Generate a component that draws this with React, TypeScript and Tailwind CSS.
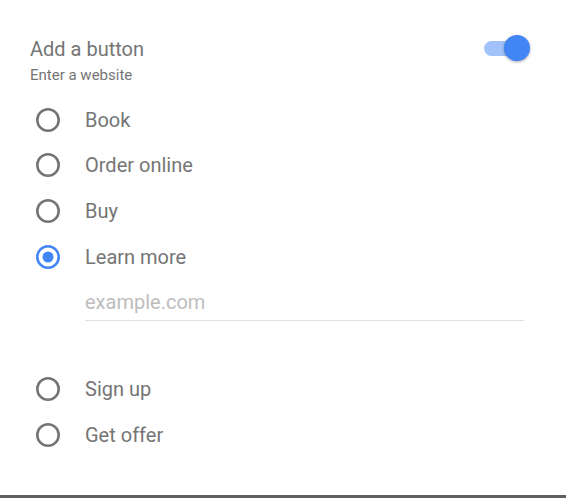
import React from "react";

function Radio({ checked }: { checked?: boolean }) {
  return (
    <svg width="24" height="24" viewBox="0 0 24 24" className="shrink-0">
      <circle cx="12" cy="12" r="10.7" fill="none" stroke={checked ? "#4285f4" : "#757575"} strokeWidth="2.6" />
      {checked && <circle cx="12" cy="12" r="5.5" fill="#4285f4" />}
    </svg>
  );
}

function Option({ label, checked }: { label: string; checked?: boolean }) {
  return (
    <div className="flex h-[45.6px] items-center">
      <div className="w-[49px] pl-[36px] box-content flex items-center">
        <Radio checked={checked} />
      </div>
      <span className="text-[20px] text-[#757575] leading-none">{label}</span>
    </div>
  );
}

export default function App() {
  return (
    <div
      className="relative w-[566px] h-[498px] bg-white overflow-hidden"
      style={{ fontFamily: "Roboto, 'Noto Sans', sans-serif" }}
    >
      <div className="flex items-start justify-between pl-[30px] pr-[36px] pt-[37px]">
        <div className="flex flex-col">
          <span className="text-[20px] leading-[24px] text-[#757575]">Add a button</span>
          <span className="text-[15px] leading-[18px] mt-[5px] text-[#757575]">Enter a website</span>
        </div>
        <div className="relative w-[46px] h-[26px] mt-[-2px]">
          <div className="absolute left-0 top-[6px] w-[40px] h-[15px] rounded-full bg-[#a1c2fa]" />
          <div className="absolute right-0 top-0 w-[26px] h-[26px] rounded-full bg-[#4285f4] shadow-[0_1px_3px_rgba(0,0,0,0.35)]" />
        </div>
      </div>
      <div className="flex flex-col mt-[13px]">
        <Option label="Book" />
        <Option label="Order online" />
        <Option label="Buy" />
        <Option label="Learn more" checked />
        <div className="ml-[85px] mr-[42px] mt-[11px] border-b border-[#e0e0e0] pb-[4px]">
          <span className="text-[20px] leading-[24px] text-[#bdbdbd]">example.com</span>
        </div>
        <div className="h-[45px]" />
        <Option label="Sign up" />
        <Option label="Get offer" />
      </div>
      <div className="absolute left-0 right-0 bottom-0 h-[3px] bg-[#5f5f5f]" />
    </div>
  );
}
